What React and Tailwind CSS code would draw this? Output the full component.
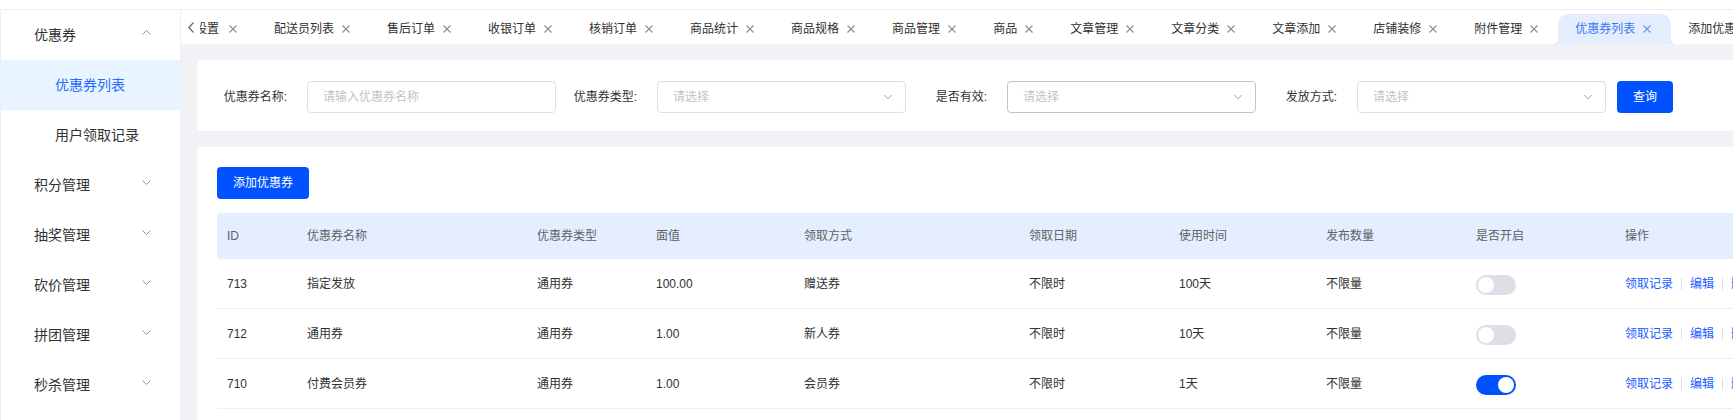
import { ChevronDown } from 'lucide-react'

const tabs = [
  { label: '配送员列表' },
  { label: '售后订单' },
  { label: '收银订单' },
  { label: '核销订单' },
  { label: '商品统计' },
  { label: '商品规格' },
  { label: '商品管理' },
  { label: '商品' },
  { label: '文章管理' },
  { label: '文章分类' },
  { label: '文章添加' },
  { label: '店铺装修' },
  { label: '附件管理' },
  { label: '优惠券列表', active: true },
  { label: '添加优惠券' },
]

const menus = ['积分管理', '抽奖管理', '砍价管理', '拼团管理', '秒杀管理']

const columns = ['ID', '优惠券名称', '优惠券类型', '面值', '领取方式', '领取日期', '使用时间', '发布数量', '是否开启', '操作']

const coupons = [
  { id: 713, name: '指定发放', type: '通用券', value: '100.00', way: '赠送券', date: '不限时', use: '100天', total: '不限量', on: false },
  { id: 712, name: '通用券', type: '通用券', value: '1.00', way: '新人券', date: '不限时', use: '10天', total: '不限量', on: false },
  { id: 710, name: '付费会员券', type: '通用券', value: '1.00', way: '会员券', date: '不限时', use: '1天', total: '不限量', on: true },
]

const grid = 'grid grid-cols-[80px_230px_119px_148px_225px_150px_147px_150px_149px_220px]'

function CloseIcon({ color = '#8c8c8c' }) {
  return (
    <svg width="8" height="8" viewBox="0 0 8 8" className="shrink-0">
      <path d="M0.5 0.5 L7.5 7.5 M7.5 0.5 L0.5 7.5" stroke={color} strokeWidth="1.1" />
    </svg>
  )
}

function Caret({ up }) {
  return (
    <svg width="9" height="5" viewBox="0 0 9 5" className="shrink-0">
      <polyline
        points={up ? '0.5,4.5 4.5,0.5 8.5,4.5' : '0.5,0.5 4.5,4.5 8.5,0.5'}
        fill="none"
        stroke="#909399"
        strokeWidth="1"
      />
    </svg>
  )
}

function Select({ hover }) {
  return (
    <div className={`w-[249px] h-[32px] rounded-[4px] border bg-white flex items-center justify-between pl-[15px] pr-[10px] ${hover ? 'border-[#c0c4cc]' : 'border-[#dcdfe6]'}`}>
      <span className="text-[12px] text-[#c0c4cc]">请选择</span>
      <ChevronDown size={14} strokeWidth={1.5} color="#909399" />
    </div>
  )
}

function Toggle({ on }) {
  return (
    <div className={`w-[40px] h-[20px] rounded-full flex items-center ${on ? 'bg-[#0052ff]' : 'bg-[#dcdfe6]'}`}>
      <div className={`w-[16px] h-[16px] rounded-full bg-white ${on ? 'ml-[22px]' : 'ml-[2px]'}`} />
    </div>
  )
}

export default function App() {
  return (
    <div className="w-[1733px] h-[420px] overflow-hidden bg-white flex flex-col font-['Liberation_Sans','Noto_Sans_CJK_SC',sans-serif]">
      {/* header edge */}
      <div className="h-[10px] shrink-0 border-b border-[#eeeeee]" />

      <div className="flex flex-1 min-h-0">
        {/* Sidebar */}
        <aside className="w-[181px] shrink-0 bg-white border-r border-l border-[#eeeeee] text-[14px] text-[#303133]">
          <div className="h-[50px] flex items-center justify-between pl-[33px] pr-[29px]">
            <span>优惠券</span>
            <span className="mb-[5px]"><Caret up /></span>
          </div>
          <div className="h-[50px] flex items-center pl-[54px] bg-[#e8f4ff] text-[#2a6bff]">优惠券列表</div>
          <div className="h-[50px] flex items-center pl-[54px]">用户领取记录</div>
          {menus.map(m => (
            <div key={m} className="h-[50px] flex items-center justify-between pl-[33px] pr-[29px]">
              <span>{m}</span>
              <span className="mb-[5px]"><Caret /></span>
            </div>
          ))}
        </aside>

        {/* Main */}
        <main className="flex-1 min-w-0 flex flex-col bg-[#f0f2f5] overflow-hidden">
          {/* Tabs */}
          <div className="h-[34px] shrink-0 bg-white flex">
            <div className="w-[19px] shrink-0 flex items-center justify-center">
              <svg width="6" height="11" viewBox="0 0 6 11">
                <polyline points="5.5,0.5 0.8,5.5 5.5,10.5" fill="none" stroke="#606266" strokeWidth="1.1" />
              </svg>
            </div>
            <div className="flex-1 min-w-0 overflow-hidden flex items-end">
              <div className="flex -ml-[5px] h-[30px] text-[12px] text-[#303133]">
                <div className="shrink-0 flex items-center pr-[20px]">
                  <span>设置</span>
                  <span className="ml-[10px] flex"><CloseIcon /></span>
                </div>
                {tabs.map(t => (
                  <div
                    key={t.label}
                    className={`relative shrink-0 flex items-center pl-[17px] pr-[20px] whitespace-nowrap ${t.active ? 'bg-[#e5eeff] text-[#3a78f2] rounded-t-[10px]' : ''}`}
                  >
                    {t.active && (
                      <>
                        <span className="absolute bottom-0 -left-[6px] w-[6px] h-[6px] bg-[radial-gradient(circle_at_0_0,transparent_6px,#e5eeff_6.5px)]" />
                        <span className="absolute bottom-0 -right-[6px] w-[6px] h-[6px] bg-[radial-gradient(circle_at_100%_0,transparent_6px,#e5eeff_6.5px)]" />
                      </>
                    )}
                    <span>{t.label}</span>
                    <span className="ml-[8px] flex"><CloseIcon color={t.active ? '#6d96e8' : '#8c8c8c'} /></span>
                  </div>
                ))}
              </div>
            </div>
          </div>

          <div className="p-[16px] flex flex-col gap-[16px]">
            {/* Filter card */}
            <div className="w-[1600px] shrink-0 h-[71px] bg-white rounded-[4px] flex items-start pt-[21px] pl-[9px] text-[12px] text-[#333333]">
              <label className="w-[101px] h-[32px] flex items-center justify-end pr-[20px]">优惠券名称:</label>
              <div className="w-[249px] h-[32px] rounded-[4px] border border-[#dcdfe6] flex items-center pl-[15px] text-[#c0c4cc]">请输入优惠券名称</div>
              <label className="w-[101px] h-[32px] flex items-center justify-end pr-[20px]">优惠券类型:</label>
              <Select />
              <label className="w-[101px] h-[32px] flex items-center justify-end pr-[20px]">是否有效:</label>
              <Select hover />
              <label className="w-[101px] h-[32px] flex items-center justify-end pr-[20px]">发放方式:</label>
              <Select />
              <button className="ml-[11px] w-[56px] h-[32px] rounded-[4px] bg-[#0052ff] text-white text-[12px]">查询</button>
            </div>

            {/* Table card */}
            <div className="w-[1600px] shrink-0 bg-white rounded-[4px] p-[20px]">
              <button className="w-[92px] h-[32px] rounded-[4px] bg-[#0052ff] text-white text-[12px]">添加优惠券</button>
              <div className="mt-[14px] text-[12px]">
                <div className={`${grid} h-[46px] bg-[#e5eeff] rounded-[4px] text-[#606266]`}>
                  {columns.map(c => (
                    <div key={c} className="pl-[10px] flex items-center">{c}</div>
                  ))}
                </div>
                {coupons.map(row => (
                  <div key={row.id} className={`${grid} h-[50px] border-b border-[#ebeef5] text-[#303133]`}>
                    <div className="pl-[10px] flex items-center">{row.id}</div>
                    <div className="pl-[10px] flex items-center">{row.name}</div>
                    <div className="pl-[10px] flex items-center">{row.type}</div>
                    <div className="pl-[10px] flex items-center">{row.value}</div>
                    <div className="pl-[10px] flex items-center">{row.way}</div>
                    <div className="pl-[10px] flex items-center">{row.date}</div>
                    <div className="pl-[10px] flex items-center">{row.use}</div>
                    <div className="pl-[10px] flex items-center">{row.total}</div>
                    <div className="pl-[10px] flex items-center pt-[2px]"><Toggle on={row.on} /></div>
                    <div className="pl-[10px] flex items-center text-[#1a5cff] whitespace-nowrap">
                      <span>领取记录</span>
                      <span className="mx-[8px] w-px h-[12px] bg-[#dcdfe6]" />
                      <span>编辑</span>
                      <span className="mx-[8px] w-px h-[12px] bg-[#dcdfe6]" />
                      <span>删除</span>
                    </div>
                  </div>
                ))}
              </div>
            </div>
          </div>
        </main>
      </div>
    </div>
  )
}
